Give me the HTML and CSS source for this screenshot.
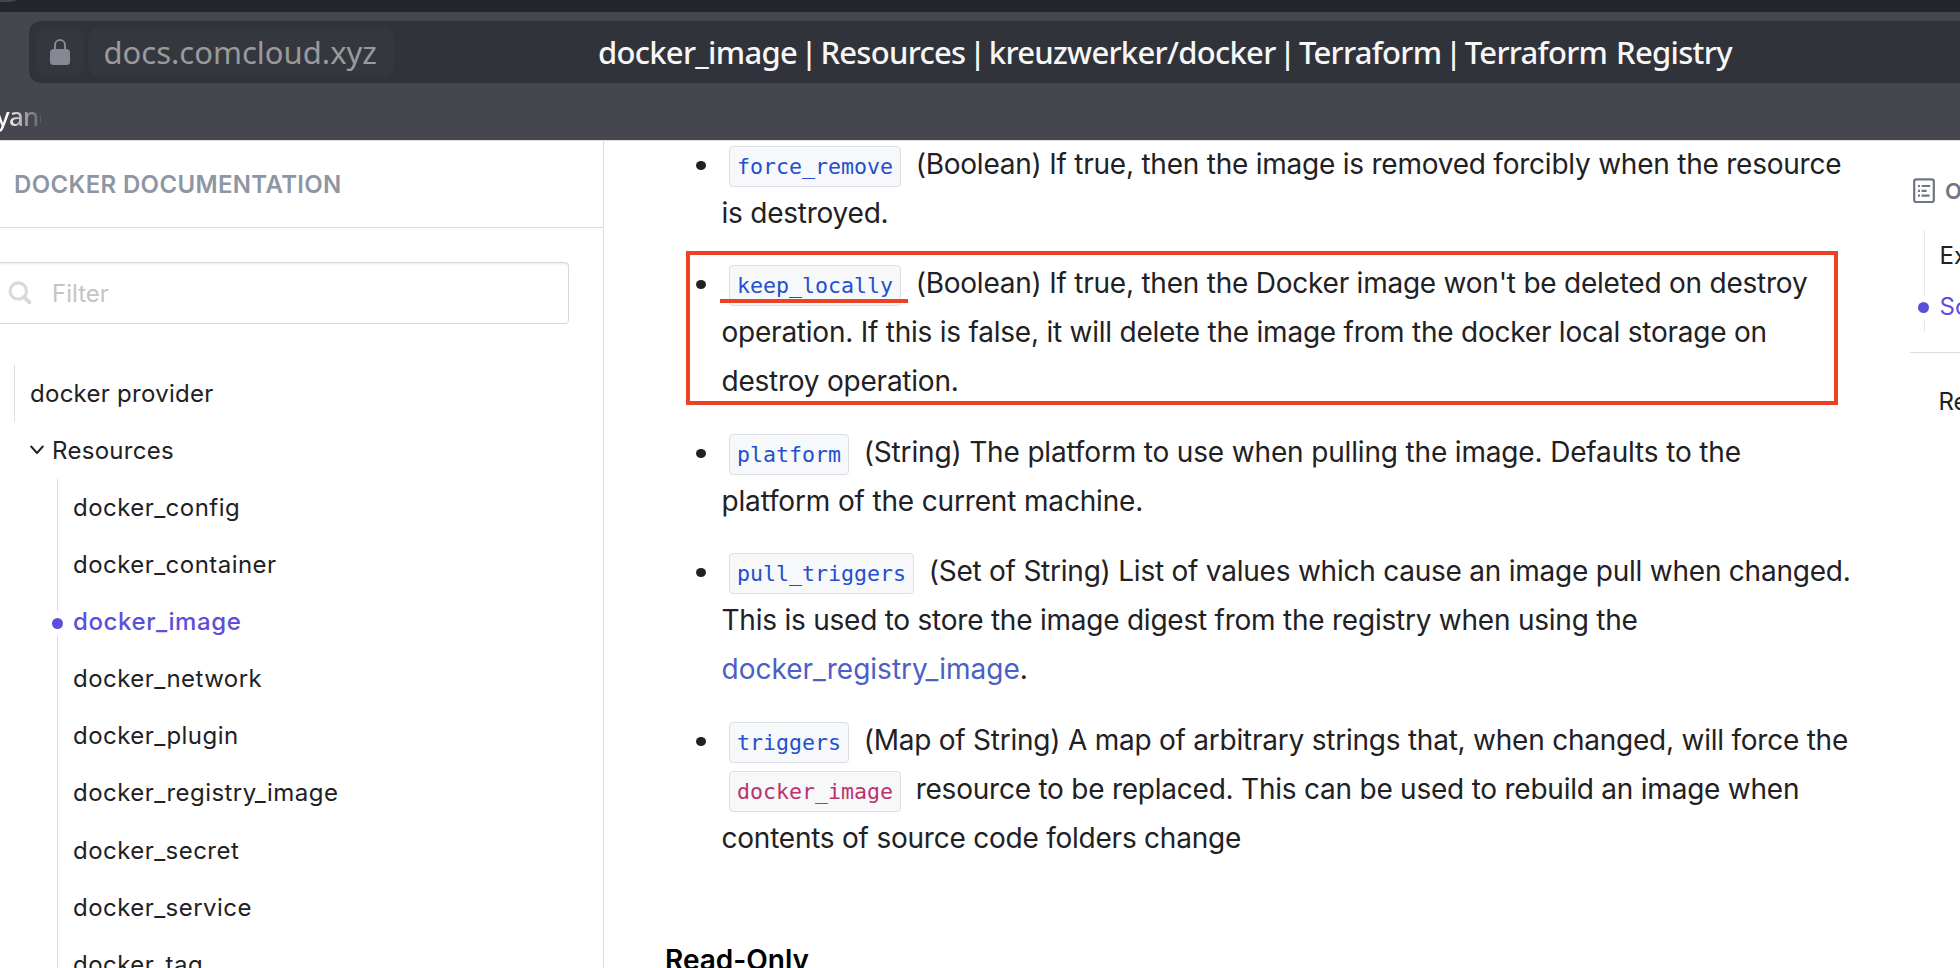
FILE: index.html
```html
<!DOCTYPE html>
<html lang="en">
<head>
<meta charset="utf-8">
<title>docker_image | Resources | kreuzwerker/docker | Terraform | Terraform Registry</title>
<link rel="stylesheet" href="styles.css">
</head>
<body>
<div class="window">
  <header class="chrome">
    <div class="tabstrip"><span class="tab-edge"></span></div>
    <div class="address">
      <span class="lock">
        <svg width="20" height="26" viewBox="0 0 20 26"><path d="M5 11V6a5 5 0 0 1 10 0V11" fill="none" stroke="#858890" stroke-width="2"/><rect x="0" y="10" width="20" height="16" rx="3.5" fill="#858890"/></svg>
      </span>
      <span class="host">docs.comcloud.xyz</span>
      <span class="page-title">docker_image | Resources | kreuzwerker/docker | Terraform | <span class="site">Terraform Registry</span></span>
    </div>
    <div class="bookmarks"><span class="bookmark">yand</span></div>
  </header>

  <div class="page">
    <aside class="sidebar">
      <div class="sidebar-head">DOCKER DOCUMENTATION</div>
      <div class="filter">
        <svg width="24" height="24" viewBox="0 0 24 24" fill="none" stroke="#d9d9d9"><circle cx="10.3" cy="10" r="8.2" stroke-width="3.2"/><path d="M16 16l5.4 5.2" stroke-width="4" stroke-linecap="round"/></svg>
        <span>Filter</span>
      </div>
      <nav class="tree">
        <div class="item provider">docker provider</div>
        <div class="item group">
          <svg width="14" height="10" viewBox="0 0 14 10" fill="none" stroke="#212124" stroke-width="1.9" stroke-linecap="round" stroke-linejoin="round"><path d="M1.2 1.5L7 8l5.8-6.5"/></svg>
          <span>Resources</span>
        </div>
        <div class="children">
          <div class="item">docker_config</div>
          <div class="item">docker_container</div>
          <div class="item active"><i class="dot"></i>docker_image</div>
          <div class="item">docker_network</div>
          <div class="item">docker_plugin</div>
          <div class="item">docker_registry_image</div>
          <div class="item">docker_secret</div>
          <div class="item">docker_service</div>
          <div class="item">docker_tag</div>
        </div>
      </nav>
    </aside>

    <main class="article">
      <ul class="args">
        <li><code>force_remove</code> (Boolean) If true, then the image is removed forcibly when the resource<br>is destroyed.</li>
        <li><code>keep_locally</code> (Boolean) If true, then the Docker image won't be deleted on destroy<br>operation. If this is false, it will delete the image from the docker local storage on<br>destroy operation.<span class="mark-box"></span><span class="mark-line"></span></li>
        <li class="roomy"><code>platform</code> (String) The platform to use when pulling the image. Defaults to the<br>platform of the current machine.</li>
        <li><code>pull_triggers</code> (Set of String) List of values which cause an image pull when changed.<br>This is used to store the image digest from the registry when using the<br><a>docker_registry_image</a>.</li>
        <li><code>triggers</code> (Map of String) A map of arbitrary strings that, when changed, will force the<br><code class="plain">docker_image</code> resource to be replaced. This can be used to rebuild an image when<br>contents of source code folders change</li>
      </ul>
      <h3>Read-Only</h3>
    </main>

    <aside class="toc">
      <div class="toc-head">
        <svg width="22" height="26" viewBox="0 0 22 26" fill="none" stroke="#6f7682"><rect x="1.2" y="1.4" width="19.6" height="22.6" rx="2" stroke-width="2.2"/><path d="M5 8h2M5 12.8h2M5 17.6h2M8.6 8h8.6M8.6 12.8h5M8.6 17.6h8" stroke-width="2.2"/></svg>
        <span>ON THIS PAGE</span>
      </div>
      <div class="toc-list">
        <div>Example Usage</div>
        <div class="current"><i class="dot"></i>Schema</div>
      </div>
      <div class="toc-foot">Report an issue</div>
    </aside>
  </div>
</div>
</body>
</html>
```
FILE: styles.css
```css
* { box-sizing: border-box; }
body { margin: 0; }

.window {
  width: 1960px;
  height: 968px;
  overflow: hidden;
  display: flex;
  flex-direction: column;
  background: #fff;
  color: #212124;
  font-family: Inter, "Liberation Sans", sans-serif;
  white-space: nowrap;
}

/* Browser chrome */
.chrome {
  flex: none;
  height: 140px;
  background: #46464f;
  font-family: "Noto Sans", sans-serif;
}
.tabstrip { height: 12px; background: #24262e; }
.tab-edge {
  display: block;
  width: 16px;
  height: 2px;
  background: #46464f;
  border-bottom-right-radius: 12px 2px;
}
.address {
  display: flex;
  align-items: center;
  gap: 4px;
  height: 62px;
  margin: 9px 0 0 29px;
  padding-left: 7px;
  background: #31333b;
  border-radius: 12px 0 0 12px;
}
.lock, .host {
  display: flex;
  align-items: center;
  height: 48px;
  background: #35373f;
  border-radius: 11px;
}
.lock { width: 48px; justify-content: center; }
.host {
  width: 306px;
  padding-left: 15.5px;
  color: #9a9a9d;
  font-size: 31px;
}
.page-title {
  margin-left: 200px;
  color: #f7f7f8;
  font-size: 31px;
  font-weight: 500;
  letter-spacing: -0.71px;
  word-spacing: -3.85px;
}
.site { word-spacing: 1.5px; }
.bookmarks { height: 57px; padding-top: 16px; overflow: hidden; }
.bookmark {
  display: block;
  width: 45px;
  margin-left: -4px;
  overflow: hidden;
  font-size: 26px;
  font-weight: 500;
  letter-spacing: -0.8px;
  line-height: 34px;
  color: transparent;
  background: linear-gradient(90deg, #fff 10px, #46464f 50px);
  -webkit-background-clip: text;
  background-clip: text;
}

/* Page body */
.page {
  flex: none;
  display: flex;
  height: 828px;
  border-top: 1px solid #dedee0;
  overflow: hidden;
}

.sidebar {
  width: 604px;
  flex: none;
  border-right: 1px solid #dcdee1;
  font-size: 24px;
  letter-spacing: 0.27px;
}
.sidebar-head {
  height: 87px;
  padding-left: 14px;
  border-bottom: 1px solid #dcdee1;
  line-height: 88px;
  font-weight: 600;
  letter-spacing: 0.34px;
  color: #8e96a3;
}
.filter {
  display: flex;
  align-items: center;
  gap: 20px;
  width: 573px;
  height: 62px;
  margin: 34px 0 0 -4px;
  padding-left: 11px;
  border: 1px solid #d6d6d8;
  border-radius: 4px;
  box-shadow: inset 0 3px 3px -2px #e8e8e8;
  color: #c4c4c4;
  letter-spacing: 0;
}
.filter svg { margin-top: -1px; }
.tree { margin-top: 40.5px; line-height: 57.15px; }
.item { height: 57.15px; }
.provider { margin-left: 14px; padding-left: 15px; border-left: 1px solid #dcdee1; }
.group { display: flex; align-items: center; gap: 8px; padding-left: 30px; letter-spacing: 0.3px; }
.children { margin-left: 57px; letter-spacing: 0.46px; }
.children .item { border-left: 1px solid #d9dce3; padding-left: 15px; }
.dot {
  position: absolute;
  left: -6px;
  top: 50%;
  width: 11px;
  height: 11px;
  margin-top: -4px;
  border-radius: 50%;
  background: #5c4fdc;
  box-shadow: 0 0 0 7px #fff;
}
.children .active { position: relative; color: #5c4fdc; font-weight: 500; letter-spacing: 0.6px; }

.article {
  width: 1306px;
  flex: none;
  padding-left: 61px;
  font-size: 28px;
}
.args {
  list-style: none;
  margin: -1px 0 0;
  padding: 0 0 0 56.5px;
  line-height: 49px;
  letter-spacing: -0.23px;
}
.args li { position: relative; margin-bottom: 21px; }
.args li:nth-child(even) { margin-bottom: 22px; }
.args .roomy { letter-spacing: -0.16px; }
.args li::before {
  content: "";
  position: absolute;
  left: -25.5px;
  top: 21px;
  width: 10px;
  height: 9px;
  border-radius: 50%;
  background: #212124;
}
code {
  margin: 0 7px 0 7.5px;
  padding: 7px;
  border: 1px solid #dcdfe5;
  border-radius: 4px;
  background: #f7f8fa;
  color: #2350cc;
  font: 21.6px/1 "DejaVu Sans Mono", monospace;
  letter-spacing: 0;
}
code.plain { color: #bb336a; }
.args a { color: #4c5fc4; letter-spacing: 0; }
.mark-box {
  position: absolute;
  left: -35.5px;
  top: -8px;
  width: 1152px;
  height: 154px;
  border: 4px solid #eb4226;
}
.mark-line {
  position: absolute;
  left: -1.5px;
  top: 40px;
  width: 188px;
  height: 4px;
  background: #eb4226;
}
h3 {
  margin: 73px 0 0;
  font-size: 28px;
  font-weight: 600;
  line-height: 49px;
  color: #000;
}

.toc { flex: none; width: 200px; font-size: 24px; }
.toc-head {
  display: flex;
  align-items: center;
  gap: 10px;
  height: 26px;
  margin: 37px 0 0 3px;
  font-size: 22px;
  font-weight: 600;
  color: #6f7682;
}
.toc-list {
  height: 102px;
  margin: 26px 0 0 14px;
  padding-left: 14.5px;
  border-left: 1px solid #e4e6ea;
  line-height: 51px;
}
.current { position: relative; color: #5c4fdc; }
.current .dot { left: -21.5px; margin-top: -5px; }
.toc-foot {
  margin-top: 20px;
  padding: 20px 0 0 28.5px;
  border-top: 1px solid #dcdee4;
  line-height: 58px;
}
```
